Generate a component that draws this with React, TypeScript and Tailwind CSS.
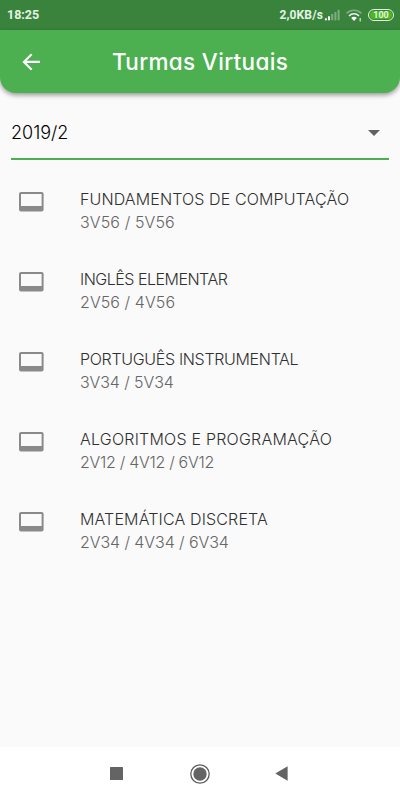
interface Course {
  name: string;
  schedule: string;
  nameClass: string;
  scheduleClass: string;
}

const courses: Course[] = [
  {
    name: "FUNDAMENTOS DE COMPUTAÇÃO",
    schedule: "3V56 / 5V56",
    nameClass: "tracking-[0.12px]",
    scheduleClass: "tracking-[0.12px]",
  },
  {
    name: "INGLÊS ELEMENTAR",
    schedule: "2V56 / 4V56",
    nameClass: "tracking-[-0.5px]",
    scheduleClass: "tracking-[0.08px]",
  },
  {
    name: "PORTUGUÊS INSTRUMENTAL",
    schedule: "3V34 / 5V34",
    nameClass: "tracking-[-0.32px]",
    scheduleClass: "tracking-[-0.1px]",
  },
  {
    name: "ALGORITMOS E PROGRAMAÇÃO",
    schedule: "2V12 / 4V12 / 6V12",
    nameClass: "tracking-[0.22px]",
    scheduleClass: "tracking-[-0.3px]",
  },
  {
    name: "MATEMÁTICA DISCRETA",
    schedule: "2V34 / 4V34 / 6V34",
    nameClass: "tracking-[0.15px]",
    scheduleClass: "tracking-[-0.08px]",
  },
];

function StatusBar() {
  return (
    <div className="flex h-[30px] items-center justify-between bg-[#3a833d] pl-[7px] pr-[6px] font-['Roboto',sans-serif] text-[12.5px] font-bold text-[#e4f3e4]">
      <span className="leading-4">18:25</span>
      <div className="flex items-center">
        <span className="text-[12px] leading-4 tracking-[0.12px]">2,0KB/s</span>
        {/* Signal */}
        <svg className="ml-px h-[12px] w-[16px]" viewBox="0 0 16 12" fill="#fff">
          <rect x="0.9" y="9.3" width="2" height="2" />
          <rect x="4" y="7.3" width="2" height="4" />
          <rect x="7.2" y="5" width="2" height="6.3" opacity="0.35" />
          <rect x="10.4" y="3" width="2" height="8.3" opacity="0.35" />
          <rect x="13.6" y="0.8" width="2" height="10.5" opacity="0.35" />
        </svg>
        {/* Wifi */}
        <svg className="ml-[6px] h-[13px] w-[16px]" viewBox="0 0 16 13" fill="none" stroke="#fff" strokeWidth="1.5">
          <path d="M0.6 4.4a10.4 10.4 0 0 1 14.8 0" opacity="0.35" />
          <path d="M3 7a6.8 6.8 0 0 1 10 0" opacity="0.9" />
          <path d="M5.2 9.1a3.8 3.8 0 0 1 5.6 0L8 12z" fill="#fff" stroke="none" />
          <path d="M14.2 9v3.5" strokeWidth="1.2" opacity="0.8" />
        </svg>
        {/* Battery */}
        <div className="ml-[6px] flex h-[12px] w-[26px] items-center justify-center rounded-full border border-[#e4f3e4] p-px">
          <div className="flex h-full w-full items-center justify-center rounded-full bg-[#4cb81c] text-[9px] leading-none">
            100
          </div>
        </div>
      </div>
    </div>
  );
}

function AppBar() {
  return (
    <header className="flex h-[63px] items-center rounded-b-[16px] bg-[#4caf50] pl-[19px] text-white shadow-[0_2px_5px_rgba(0,0,0,0.42)]">
      <svg className="h-6 w-6" viewBox="0 0 24 24" fill="currentColor">
        <path d="M20.4 11H7.83l5.59-5.59L12 4l-8 8 8 8 1.41-1.41L7.83 13h12.57v-2z" transform="translate(-0.9 -0.9) scale(1.07)" />
      </svg>
      <h1 className="ml-[69px] whitespace-nowrap text-[22.5px] font-medium leading-8 tracking-[0.33px] [font-feature-settings:'cv11']">
        Turmas Virtuais
      </h1>
    </header>
  );
}

function SemesterSelect() {
  return (
    <button className="mx-[11px] mt-[15px] flex h-[52px] items-center justify-between border-b-2 border-[#4caf50] pr-[9px] text-black">
      <span className="pb-px text-[18px] font-[350] leading-6">2019/2</span>
      <svg className="h-[6px] w-[12px]" viewBox="0 0 12 6" fill="#616161">
        <path d="M0 0h12L6 6z" />
      </svg>
    </button>
  );
}

function CourseItem({ course }: { course: Course }) {
  return (
    <li className="flex h-20">
      <svg className="ml-[19px] mt-[13px] h-5 w-[25px] shrink-0" viewBox="0 0 25 20" fill="#8a8a8a">
        <path
          fillRule="evenodd"
          d="M2 0h20.6a2 2 0 0 1 2 2v15.4a2 2 0 0 1-2 2H2a2 2 0 0 1-2-2V2a2 2 0 0 1 2-2zM2 2v12h20.6V2z"
        />
      </svg>
      <div className="ml-[36px] mt-[8px] whitespace-nowrap font-light">
        <p className={`text-[16px] leading-6 text-[#303030] ${course.nameClass}`}>{course.name}</p>
        <p className={`text-[16px] leading-[23px] text-[#666] ${course.scheduleClass}`}>{course.schedule}</p>
      </div>
    </li>
  );
}

function NavigationBar() {
  return (
    <nav className="flex h-[53px] items-center justify-between bg-white pl-[110px] pr-[112px]">
      <svg className="h-[13px] w-[13px]" viewBox="0 0 13 13" fill="#646464">
        <rect width="13" height="13" rx="0.5" />
      </svg>
      <svg className="ml-[2px] h-5 w-5" viewBox="0 0 20 20">
        <circle cx="10" cy="10" r="9.2" fill="none" stroke="#5c5c5c" strokeWidth="1.3" />
        <circle cx="10" cy="10" r="6.7" fill="#646464" />
      </svg>
      <svg className="h-[15px] w-[13px]" viewBox="0 0 13 15" fill="#646464">
        <path d="M12.6 0.3v14.4L0.3 7.5z" />
      </svg>
    </nav>
  );
}

export default function App() {
  return (
    <div className="flex h-[800px] w-[400px] flex-col overflow-hidden bg-[#fafafa] font-['Inter',sans-serif]">
      <StatusBar />
      <AppBar />
      <SemesterSelect />
      <ul className="mt-[19px] flex-1">
        {courses.map((course) => (
          <CourseItem key={course.name} course={course} />
        ))}
      </ul>
      <NavigationBar />
    </div>
  );
}
